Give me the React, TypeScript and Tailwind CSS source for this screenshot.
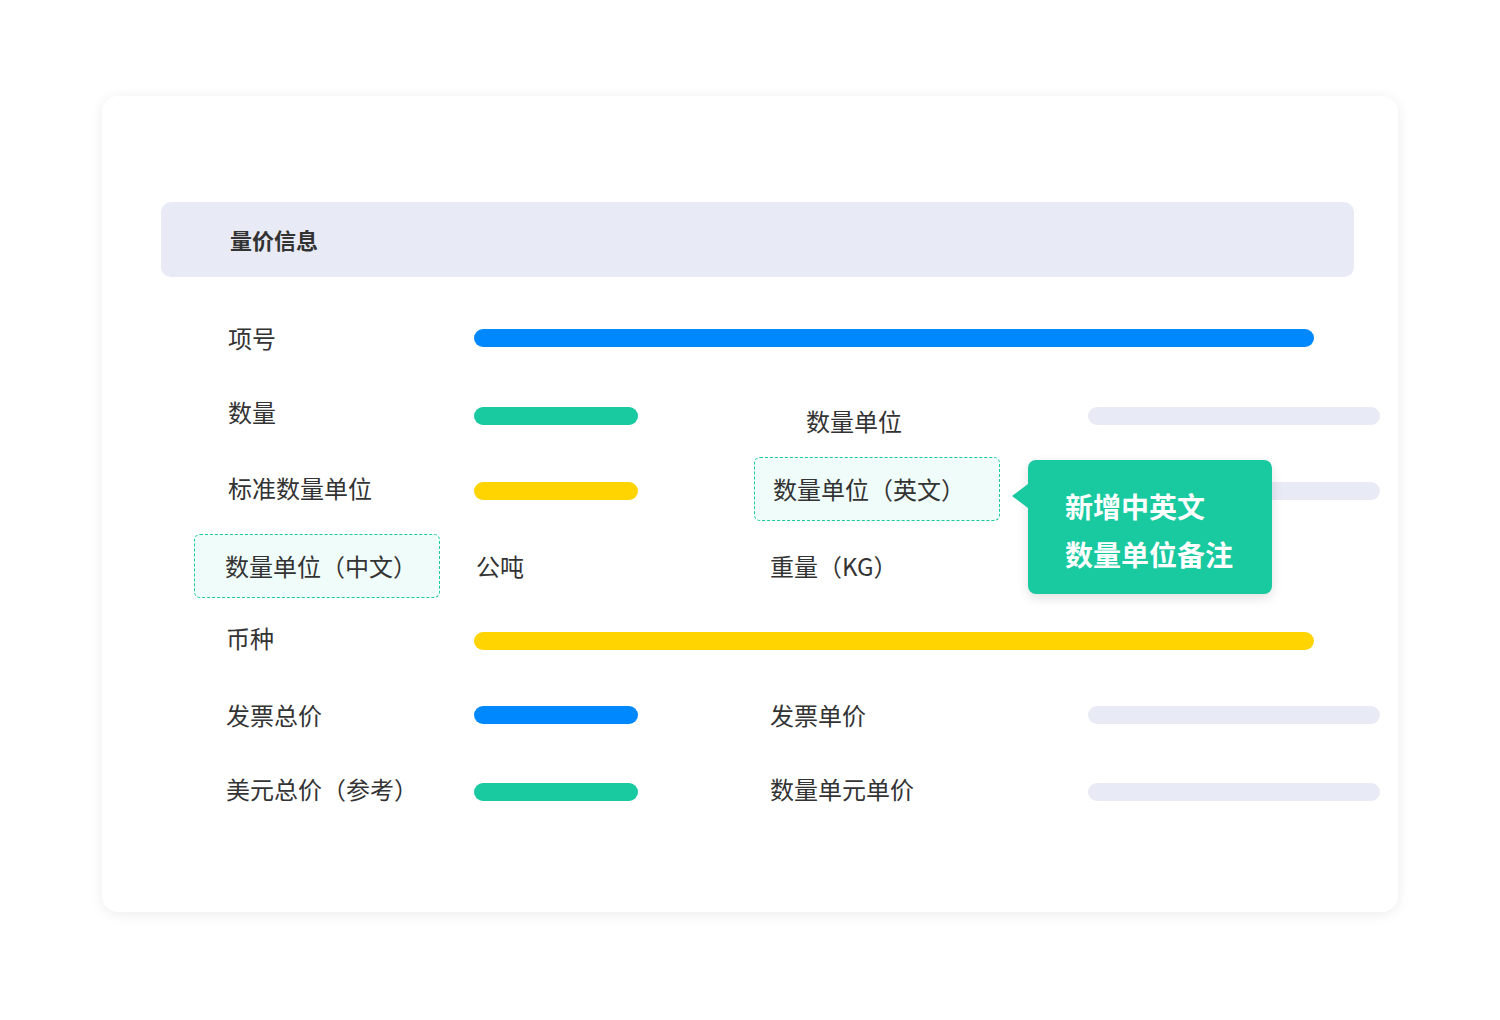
import React from "react";

const font = { fontFamily: '"Noto Sans CJK SC", "Noto Sans", sans-serif' };

function Bar({ c, w }: { c: string; w: string }) {
  return <div className={`h-[18px] rounded-full ${c} ${w}`} />;
}

function Label({ t, dashed, pl = "pl-[34px]" }: { t: string; dashed?: boolean; pl?: string }) {
  if (dashed)
    return (
      <div className={`h-[64px] flex items-center ${pl} border border-dashed border-[#19c99f] bg-[#effcf9] rounded-[6px] text-[24px] text-[#333]`}>
        {t}
      </div>
    );
  return <div className={`flex items-center ${pl} text-[24px] text-[#333]`}>{t}</div>;
}

export default function App() {
  const green = "bg-[#19c9a0]";
  const blue = "bg-[#0088ff]";
  const yellow = "bg-[#ffd400]";
  const gray = "bg-[#e8ebf5]";
  return (
    <div className="w-[1500px] h-[1020px] bg-white pt-[96px] pl-[102px]" style={font}>
      <div className="w-[1296px] h-[816px] bg-white rounded-[16px] shadow-[0_2px_14px_rgba(0,0,0,0.08)] pt-[106px] pl-[59px] relative">
        <div className="w-[1193px] h-[75px] bg-[#e8ebf5] rounded-[10px] flex items-center pl-[69px] text-[22px] font-bold text-[#333]">
          量价信息
        </div>
        <div className="ml-[33px] mt-[24px] grid grid-cols-[246px_280px_266px_294px] [grid-template-rows:74px_74px_78px_78px_66px_88px_60px] gap-x-[34px] items-center">
          <Label t="项号" />
          <div className="col-span-3"><div className="w-[840px]"><Bar c={blue} w="w-full" /></div></div>

          <Label t="数量" />
          <div className="pt-[8px]"><Bar c={green} w="w-[164px]" /></div>
          <div className="pt-[18px]"><Label t="数量单位" pl="pl-[18px]" /></div>
          <div className="pt-[8px]"><Bar c={gray} w="w-[292px]" /></div>

          <Label t="标准数量单位" />
          <div className="pt-[6px]"><Bar c={yellow} w="w-[164px]" /></div>
          <div className="-ml-[34px] w-[246px] pt-[2px]"><Label t="数量单位（英文）" dashed pl="pl-[18px]" /></div>
          <div className="pt-[6px]"><Bar c={gray} w="w-[292px]" /></div>

          <Label t="数量单位（中文）" dashed pl="pl-[30px]" />
          <div className="text-[24px] text-[#333] pl-[2px]">公吨</div>
          <div className="-ml-[34px] w-[246px]"><Label t="重量（KG）" pl="pl-[16px]" /></div>
          <div />

          <Label t="币种" pl="pl-[32px]" />
          <div className="col-span-3 pt-[6px]"><div className="w-[840px]"><Bar c={yellow} w="w-full" /></div></div>

          <Label t="发票总价" pl="pl-[32px]" />
          <div><Bar c={blue} w="w-[164px]" /></div>
          <div className="-ml-[34px] w-[246px]"><Label t="发票单价" pl="pl-[16px]" /></div>
          <div><Bar c={gray} w="w-[292px]" /></div>

          <Label t="美元总价（参考）" pl="pl-[32px]" />
          <div className="pt-[6px]"><Bar c={green} w="w-[164px]" /></div>
          <div className="-ml-[34px] w-[246px]"><Label t="数量单元单价" pl="pl-[16px]" /></div>
          <div className="pt-[6px]"><Bar c={gray} w="w-[292px]" /></div>
        </div>

        <div className="absolute left-[926px] top-[364px] w-[244px] h-[134px] bg-[#19c99f] rounded-[8px] shadow-[0_4px_12px_rgba(0,0,0,0.12)] pl-[37px] pt-[22px] text-white text-[28px] font-bold leading-[48px]">
          <div className="absolute -left-[16px] top-[24px] w-0 h-0 border-y-[12px] border-y-transparent border-r-[16px] border-r-[#19c99f]" />
          <div>新增中英文</div>
          <div>数量单位备注</div>
        </div>
      </div>
    </div>
  );
}
